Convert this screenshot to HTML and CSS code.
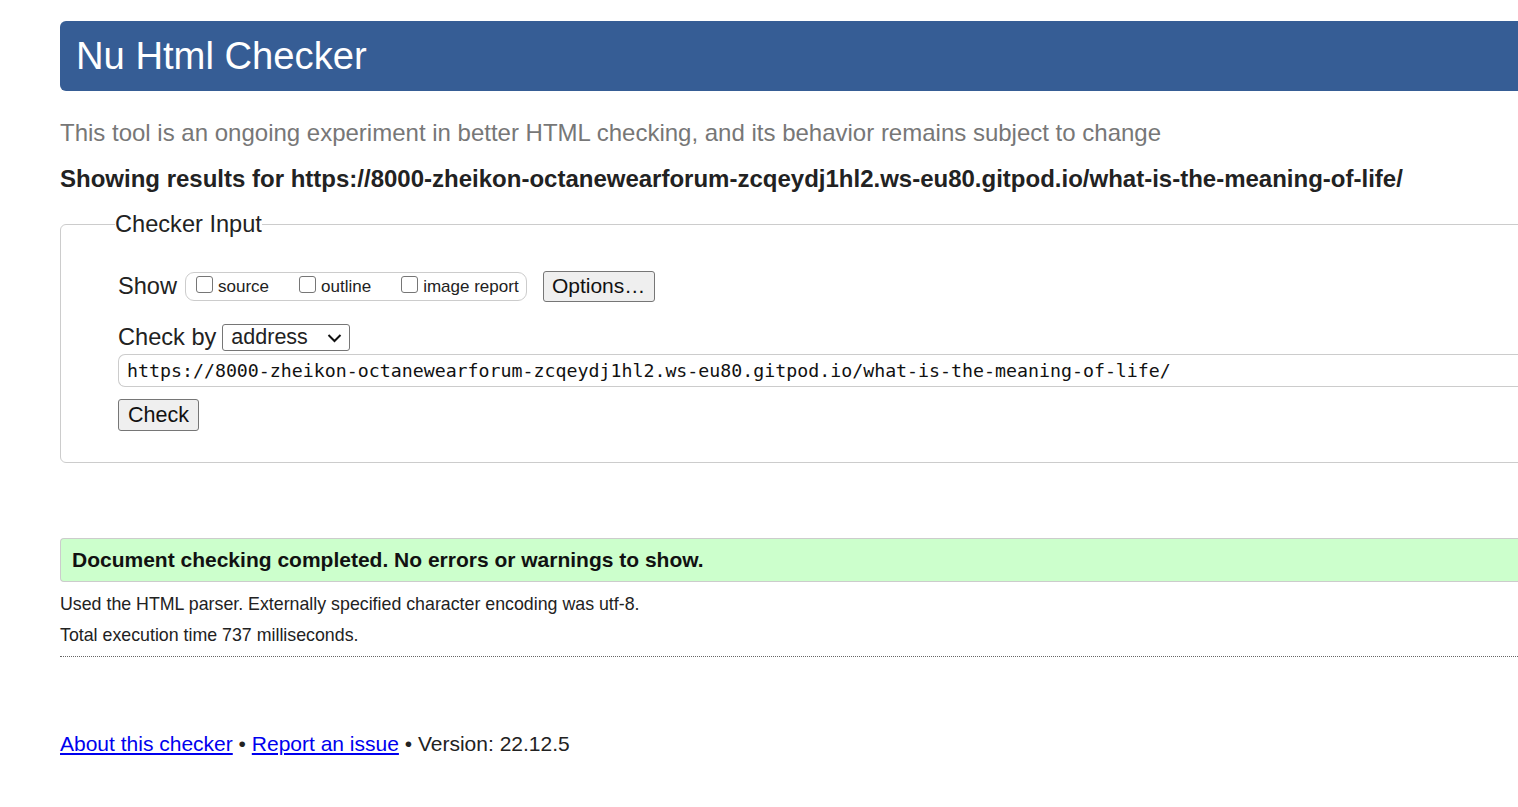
FILE: index.html
```html
<!DOCTYPE html>
<html lang="en">
<head>
<meta charset="utf-8">
<title>Nu Html Checker</title>
<link rel="stylesheet" href="styles.css">
</head>
<body>
<div class="page">
  <header class="banner"><h1 class="title">Nu Html Checker</h1></header>
  <p class="intro">This tool is an ongoing experiment in better HTML checking, and its behavior remains subject to change</p>
  <p class="showing">Showing results for https://8000-zheikon-octanewearforum-zcqeydj1hl2.ws-eu80.gitpod.io/what-is-the-meaning-of-life/</p>
  <fieldset class="input-box">
    <legend class="legend">Checker Input</legend>
    <div class="show-row">
      <span class="row-label">Show</span>
      <span class="opts">
        <label class="opt"><span class="cb"></span>source</label>
        <label class="opt"><span class="cb"></span>outline</label>
        <label class="opt"><span class="cb"></span>image report</label>
      </span>
      <button class="btn btn-options" type="button">Options…</button>
    </div>
    <div class="by-row">
      <span class="row-label">Check by</span>
      <span class="select">address
        <svg class="chev" width="15" height="10" viewBox="0 0 15 10"><path d="M1.5 2 L7.5 8 L13.5 2" fill="none" stroke="#111" stroke-width="2"/></svg>
      </span>
    </div>
    <div class="url">https://8000-zheikon-octanewearforum-zcqeydj1hl2.ws-eu80.gitpod.io/what-is-the-meaning-of-life/</div>
    <button class="btn btn-check" type="button">Check</button>
  </fieldset>
  <div class="success">Document checking completed. No errors or warnings to show.</div>
  <div class="details">
    <p class="detail">Used the HTML parser. Externally specified character encoding was utf-8.</p>
    <p class="detail">Total execution time 737 milliseconds.</p>
  </div>
  <p class="footer"><a href="#" class="link">About this checker</a> • <a href="#" class="link">Report an issue</a> • Version: 22.12.5</p>
</div>
</body>
</html>
```
FILE: styles.css
```css
html, body {
  margin: 0;
  padding: 0;
  background: #fff;
  overflow: hidden;
}
body {
  font-family: "Liberation Sans", Arial, sans-serif;
  color: #222;
}
.page {
  margin-left: 60px;
  width: 1620px;
}
.banner {
  margin-top: 21px;
  height: 70px;
  background: #365d95;
  border-radius: 6px 0 0 6px;
  padding-left: 16px;
  display: flex;
  align-items: center;
}
.title {
  margin: 0;
  font-size: 38.2px;
  font-weight: normal;
  color: #fff;
  line-height: 70px;
}
.intro {
  margin: 27px 0 0;
  line-height: 30px;
  font-size: 24px;
  color: #777;
}
.showing {
  margin: 16px 0 0;
  line-height: 30px;
  font-size: 24px;
  font-weight: bold;
  color: #222;
}
.input-box {
  margin: 15px 0 0;
  border: 1px solid #ccc;
  border-radius: 6px 0 0 6px;
  padding: 31px 0 31px 57px;
}
.legend {
  margin-left: -3px;
  padding: 0;
  font-size: 23.6px;
  line-height: 30px;
  color: #222;
}
.show-row, .by-row {
  display: flex;
  align-items: center;
}
.show-row { height: 32px; }
.by-row { height: 27px; margin-top: 22px; }
.row-label {
  font-size: 23.6px;
  margin-right: 8px;
}
.opts {
  display: flex;
  align-items: center;
  height: 27px;
  border: 1px solid #ccc;
  border-radius: 9px;
  padding: 0 7px 0 10px;
  gap: 30px;
}
.opt {
  display: flex;
  align-items: center;
  font-size: 17px;
  color: #222;
  position: relative;
  top: 1px;
}
.cb {
  width: 15px;
  height: 15px;
  border: 1.5px solid #767676;
  border-radius: 3px;
  margin-right: 5px;
  position: relative;
  top: -3px;
}
.btn {
  font-family: "Liberation Sans", Arial, sans-serif;
  background: #efefef;
  border: 1px solid #767676;
  border-radius: 3px;
  color: #111;
  padding: 0;
}
.btn-options {
  margin-left: 16px;
  width: 112px;
  height: 31px;
  font-size: 21px;
}
.select {
  display: flex;
  align-items: center;
  justify-content: space-between;
  width: 128px;
  height: 27px;
  box-sizing: border-box;
  border: 1px solid #767676;
  border-radius: 3px;
  padding: 0 7px 0 8px;
  font-size: 21.5px;
  margin-left: -2px;
}
.url {
  margin-top: 3px;
  height: 33px;
  box-sizing: border-box;
  border: 1px solid #ccc;
  border-radius: 7px 0 0 7px;
  border-right: none;
  padding-left: 8px;
  display: flex;
  align-items: center;
  font-family: "DejaVu Sans Mono", "Liberation Mono", monospace;
  font-size: 18.25px;
  color: #111;
}
.btn-check {
  display: block;
  margin-top: 12px;
  width: 81px;
  height: 32px;
  font-size: 21.5px;
}
.success {
  margin-top: 75px;
  height: 44px;
  box-sizing: border-box;
  background: #ccffcc;
  border: 1px solid #ccc;
  border-right: none;
  border-radius: 4px 0 0 4px;
  padding-left: 11px;
  display: flex;
  align-items: center;
  font-size: 21px;
  font-weight: bold;
  color: #111;
}
.details {
  margin-top: 10px;
  border-bottom: 1px dotted #666;
  padding-bottom: 9px;
}
.detail {
  margin: 0;
  line-height: 24px;
  font-size: 17.8px;
  color: #222;
}
.detail + .detail { margin-top: 7px; }
.footer {
  margin: 75px 0 0;
  line-height: 24px;
  font-size: 21px;
  color: #222;
}
.link {
  color: #0000ee;
}
```
